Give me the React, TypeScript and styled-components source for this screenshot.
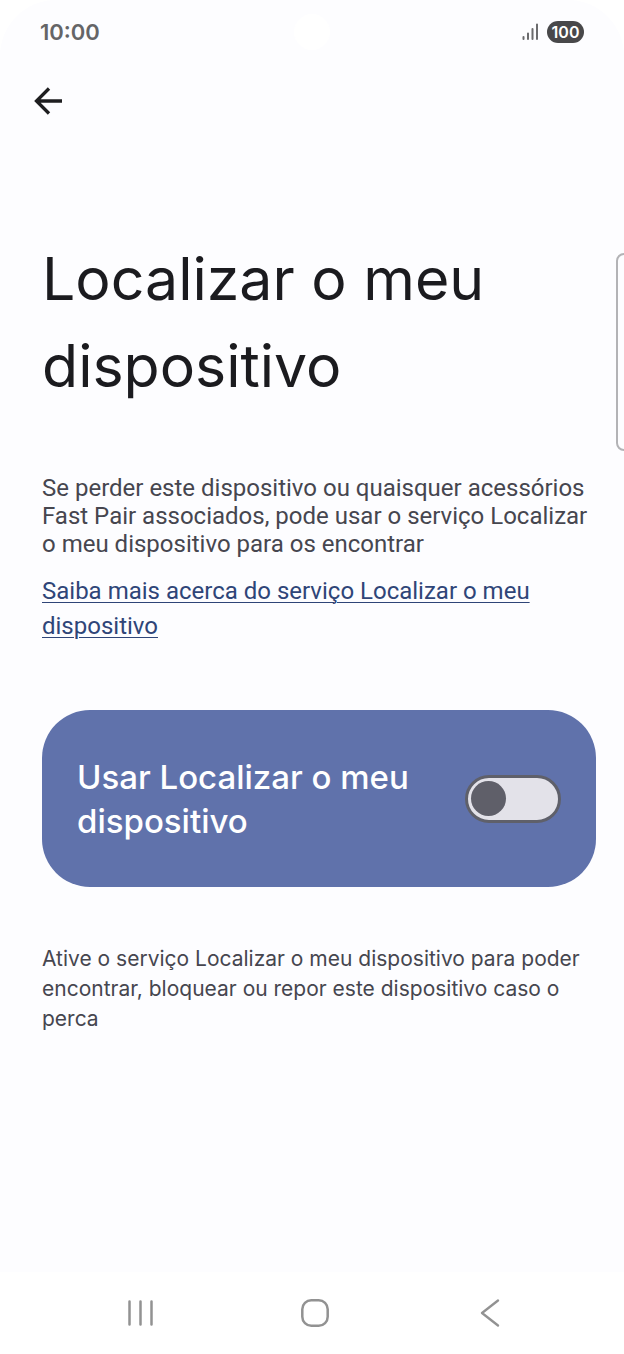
import React, { useState } from "react";
import styled, { createGlobalStyle } from "styled-components";

const GlobalStyle = createGlobalStyle`
  *, *::before, *::after { box-sizing: border-box; }
  body { margin: 0; background: #ffffff; }
`;

const display = `Inter, "Open Sans", sans-serif`;
const body = `Roboto, "Open Sans", sans-serif`;

const Screen = styled.div`
  position: relative;
  display: flex;
  flex-direction: column;
  min-height: 100vh;
  overflow: hidden;
  background: #ffffff;
`;

const Page = styled.div`
  flex: 1;
  display: flex;
  flex-direction: column;
  background: #fdfdff;
  border-radius: 56px 56px 0 0;
`;

const StatusBar = styled.header`
  display: grid;
  grid-template-columns: 1fr auto 1fr;
  align-items: center;
  height: 64px;
  padding: 0 40px;
`;

const Clock = styled.time`
  font: 600 22px/28px ${display};
  color: #656567;
`;

const Camera = styled.span`
  width: 36px;
  height: 36px;
  border-radius: 50%;
  background: #ffffff;
`;

const StatusIcons = styled.div`
  display: flex;
  justify-content: flex-end;
  align-items: center;
  gap: 8px;
`;

const Battery = styled.span`
  width: 37px;
  height: 22px;
  border-radius: 11px;
  background: #48484a;
  color: #ffffff;
  font: 600 16px/22px ${display};
  text-align: center;
`;

const IconButton = styled.button`
  display: flex;
  align-items: center;
  justify-content: center;
  width: 48px;
  height: 48px;
  padding: 0;
  border: 0;
  background: none;
  cursor: pointer;
`;

const Toolbar = styled.nav`
  display: flex;
  padding: 13px 24px;
`;

const Content = styled.main`
  display: flex;
  flex-direction: column;
  align-items: stretch;
  padding: 97px 28px 48px 42px;
`;

const Title = styled.h1`
  margin: 0;
  font: 400 59px/87px ${display};
  color: #1b1b1f;
`;

const Intro = styled.p`
  margin: 65px 0 0;
  font: 400 24px/28px ${body};
  color: #46464f;
`;

const LearnMore = styled.a`
  margin-top: 16px;
  font: 400 24px/35px ${body};
  color: #2f4578;
  text-decoration-line: underline;
  text-decoration-thickness: 1px;
  text-underline-offset: 3px;
`;

const Card = styled.label`
  display: flex;
  align-items: center;
  justify-content: space-between;
  gap: 32px;
  min-height: 177px;
  margin-top: 66px;
  padding: 36px 35px;
  border-radius: 48px;
  background: #6072ab;
  color: #ffffff;
  font: 500 33px/44px ${display};
  cursor: pointer;
`;

const Switch = styled.input`
  appearance: none;
  flex: none;
  display: flex;
  align-items: center;
  width: 96px;
  height: 48px;
  margin: 0;
  padding: 0 3px;
  border: 3px solid #5f606a;
  border-radius: 24px;
  background: #e3e2e9;
  cursor: pointer;

  &::before {
    content: "";
    width: 35px;
    height: 35px;
    border-radius: 50%;
    background: #5f5f69;
  }

  &:checked {
    justify-content: flex-end;
  }
`;

const Note = styled.p`
  margin: 57px 0 0;
  font: 400 21px/30px ${display};
  color: #46464f;
`;

const EdgePanel = styled.div`
  position: absolute;
  top: 253px;
  right: -8px;
  width: 16px;
  height: 198px;
  border: 2px solid #b3b3b6;
  border-radius: 8px;
  background: #fdfdff;
`;

const NavBar = styled.nav`
  display: grid;
  grid-template-columns: repeat(3, 175px);
  justify-content: center;
  justify-items: center;
  align-items: center;
  height: 82px;
  padding-left: 6px;
  background: #ffffff;
`;

export default function App() {
  const [enabled, setEnabled] = useState(false);
  return (
    <Screen>
      <GlobalStyle />
      <Page>
        <StatusBar>
          <Clock>10:00</Clock>
          <Camera />
          <StatusIcons>
            <svg width="17" height="18" viewBox="0 0 17 18" fill="none" stroke="#6b6b6d" strokeWidth="2" strokeLinecap="round" aria-hidden="true">
              <path d="M1.5 14v2M6 10.500v5.500M10.500 6v10M15 1.500v14.500" />
            </svg>
            <Battery>100</Battery>
          </StatusIcons>
        </StatusBar>
        <Toolbar>
          <IconButton aria-label="Voltar">
            <svg width="28" height="28" viewBox="0 0 28 28" fill="none" stroke="#1e1e20" strokeWidth="3.300" aria-hidden="true">
              <path d="M28 14H3M15 1.500L2.500 14L15 26.500" />
            </svg>
          </IconButton>
        </Toolbar>
        <Content>
          <Title>Localizar o meu dispositivo</Title>
          <Intro>
            Se perder este dispositivo ou quaisquer acessórios Fast Pair associados, pode usar o serviço Localizar o meu
            dispositivo para os encontrar
          </Intro>
          <LearnMore href="#saiba-mais">Saiba mais acerca do serviço Localizar o meu dispositivo</LearnMore>
          <Card>
            Usar Localizar o meu dispositivo
            <Switch type="checkbox" role="switch" checked={enabled} onChange={(e) => setEnabled(e.target.checked)} />
          </Card>
          <Note>
            Ative o serviço Localizar o meu dispositivo para poder encontrar, bloquear ou repor este dispositivo caso o
            perca
          </Note>
        </Content>
      </Page>
      <EdgePanel />
      <NavBar>
        <IconButton aria-label="Recentes">
          <svg width="28" height="28" viewBox="0 0 28 28" fill="none" stroke="#929292" strokeWidth="2.500" strokeLinecap="round" aria-hidden="true">
            <path d="M3.500 2.500v23M14.500 2.500v23M25.500 2.500v23" />
          </svg>
        </IconButton>
        <IconButton aria-label="Início">
          <svg width="28" height="28" viewBox="0 0 28 28" fill="none" stroke="#929292" strokeWidth="2.500" aria-hidden="true">
            <rect x="1.300" y="1.300" width="25.400" height="25.400" rx="9" />
          </svg>
        </IconButton>
        <IconButton aria-label="Anterior">
          <svg width="28" height="28" viewBox="0 0 28 28" fill="none" stroke="#929292" strokeWidth="2.300" strokeLinecap="round" strokeLinejoin="round" aria-hidden="true">
            <path d="M22 1.500L6 14L22 26.500" />
          </svg>
        </IconButton>
      </NavBar>
    </Screen>
  );
}
